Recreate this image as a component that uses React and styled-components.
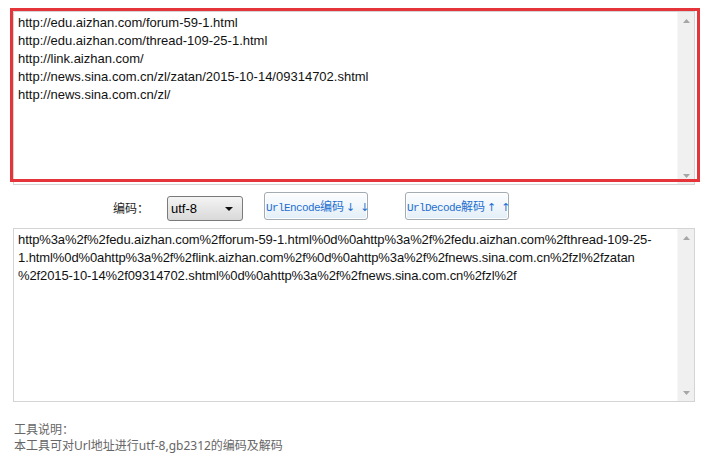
import React, { useState } from "react";
import styled, { createGlobalStyle } from "styled-components";

const GlobalStyle = createGlobalStyle`
  html, body { margin: 0; padding: 0; background: #fff; }
  body { font-family: "Liberation Sans", Arial, "Noto Sans CJK SC", sans-serif; }
`;

const Page = styled.div`
  padding: 11px 0 0 13px;
  width: 682px;
`;

const Editor = styled.div`
  position: relative;
`;

/* bordered text field with a classic scroll bar column at its right */
const Field = styled.div`
  display: flex;
  box-sizing: border-box;
  width: 682px;
  height: 174px;
  border: 1px solid #d4d4d4;
  background: #fff;
`;

const TextArea = styled.textarea`
  flex: 1;
  min-width: 0;
  margin: 0;
  padding: 2px 4px;
  border: none;
  resize: none;
  outline: none;
  overflow: hidden;
  font-family: "Liberation Sans", Arial, sans-serif;
  font-size: 13px;
  line-height: 18px;
  letter-spacing: ${(p) => (p.$tight ? "-0.1px" : "0")};
  color: #111;
  background: transparent;
  white-space: pre-wrap;
`;

const ScrollBar = styled.div`
  display: flex;
  flex-direction: column;
  justify-content: space-between;
  width: 17px;
  background: #f0f0f0;
  border-left: 1px solid #f6f6f6;
  box-sizing: border-box;
`;

const ScrollButton = styled.div`
  display: flex;
  align-items: center;
  justify-content: center;
  height: 17px;
`;

const Arrow = ({ down }) => (
  <svg width="7" height="4" viewBox="0 0 7 4">
    <path d={down ? "M0 0H7L3.5 4z" : "M3.5 0L7 4H0z"} fill="#a6a6a6" />
  </svg>
);

/* red frame drawn over the source box */
const Highlight = styled.div`
  position: absolute;
  left: -3px;
  top: -3px;
  width: 690px;
  height: 174px;
  box-sizing: border-box;
  border: 3px solid #e6343b;
  pointer-events: none;
`;

const Toolbar = styled.div`
  display: flex;
  align-items: flex-start;
  height: 43px;
`;

const Label = styled.span`
  margin: 16px 0 0 100px;
  width: 36px;
  font-family: "Liberation Sans", "Noto Sans CJK SC", sans-serif;
  font-size: 12px;
  line-height: 16px;
  color: #222;
`;

const SelectWrap = styled.div`
  position: relative;
  margin: 11px 0 0 18px;
  width: 76px;
  height: 25px;
`;

const Select = styled.select`
  appearance: none;
  box-sizing: border-box;
  width: 100%;
  height: 100%;
  margin: 0;
  padding: 0 0 0 3px;
  border: 1px solid #7a7a7a;
  border-radius: 3px;
  background: linear-gradient(#f4f4f4, #e6e6e6 50%, #d9d9d9);
  font-family: "Liberation Sans", Arial, sans-serif;
  font-size: 13px;
  color: #000;
  outline: none;
`;

const Caret = styled.svg`
  position: absolute;
  right: 10px;
  top: 11px;
  pointer-events: none;
`;

const ActionButton = styled.button`
  display: block;
  box-sizing: border-box;
  margin: 7px 0 0 ${(p) => p.$gap}px;
  width: 104px;
  height: 28px;
  padding: 0 0 0 1px;
  border: 1px solid #a3abb3;
  border-radius: 3px;
  background: linear-gradient(#fcfdfe, #f1f7fb 50%, #e2eef7);
  box-shadow: inset 0 0 0 1px #ffffff;
  color: #1f6fd0;
  text-align: left;
  line-height: 25px;
  white-space: nowrap;
  cursor: pointer;
`;

const Mono = styled.span`
  font-family: "Liberation Mono", monospace;
  font-size: 11px;
  letter-spacing: -0.6px;
`;

const Han = styled.span`
  font-family: "Noto Sans CJK SC", sans-serif;
  font-size: 12px;
`;

const Arrows = styled.span`
  font-family: "DejaVu Sans", sans-serif;
  font-size: 11px;
  margin-left: 2px;
  letter-spacing: 5px;
`;

const Note = styled.div`
  margin: 20px 0 0 1px;
  font-family: "Noto Sans", "Noto Sans CJK SC", sans-serif;
  font-size: 12px;
  line-height: 16px;
  color: #666;
`;

const source = [
  "http://edu.aizhan.com/forum-59-1.html",
  "http://edu.aizhan.com/thread-109-25-1.html",
  "http://link.aizhan.com/",
  "http://news.sina.com.cn/zl/zatan/2015-10-14/09314702.shtml",
  "http://news.sina.com.cn/zl/",
].join("\n");

const encoded = [
  "http%3a%2f%2fedu.aizhan.com%2fforum-59-1.html%0d%0ahttp%3a%2f%2fedu.aizhan.com%2fthread-109-25-",
  "1.html%0d%0ahttp%3a%2f%2flink.aizhan.com%2f%0d%0ahttp%3a%2f%2fnews.sina.com.cn%2fzl%2fzatan",
  "%2f2015-10-14%2f09314702.shtml%0d%0ahttp%3a%2f%2fnews.sina.com.cn%2fzl%2f",
].join("\n");

const TextField = ({ value, onChange, tight }) => (
  <Field>
    <TextArea value={value} onChange={onChange} $tight={tight} spellCheck={false} />
    <ScrollBar>
      <ScrollButton>
        <Arrow />
      </ScrollButton>
      <ScrollButton>
        <Arrow down />
      </ScrollButton>
    </ScrollBar>
  </Field>
);

export default function App() {
  const [input, setInput] = useState(source);
  const [output, setOutput] = useState(encoded);
  const [charset, setCharset] = useState("utf-8");

  return (
    <>
      <GlobalStyle />
      <Page>
        <Editor>
          <TextField value={input} onChange={(e) => setInput(e.target.value)} />
          <Highlight />
        </Editor>
        <Toolbar>
          <Label>编码：</Label>
          <SelectWrap>
            <Select value={charset} onChange={(e) => setCharset(e.target.value)}>
              <option value="utf-8">utf-8</option>
              <option value="gb2312">gb2312</option>
            </Select>
            <Caret width="8" height="4" viewBox="0 0 8 4">
              <path d="M0 0H8L4 4z" fill="#111" />
            </Caret>
          </SelectWrap>
          <ActionButton $gap={21}>
            <Mono>UrlEncode</Mono>
            <Han>编码</Han>
            <Arrows>↓↓</Arrows>
          </ActionButton>
          <ActionButton $gap={37}>
            <Mono>UrlDecode</Mono>
            <Han>解码</Han>
            <Arrows>↑↑</Arrows>
          </ActionButton>
        </Toolbar>
        <TextField value={output} onChange={(e) => setOutput(e.target.value)} tight />
        <Note>
          工具说明：
          <br />
          本工具可对Url地址进行utf-8,gb2312的编码及解码
        </Note>
      </Page>
    </>
  );
}
